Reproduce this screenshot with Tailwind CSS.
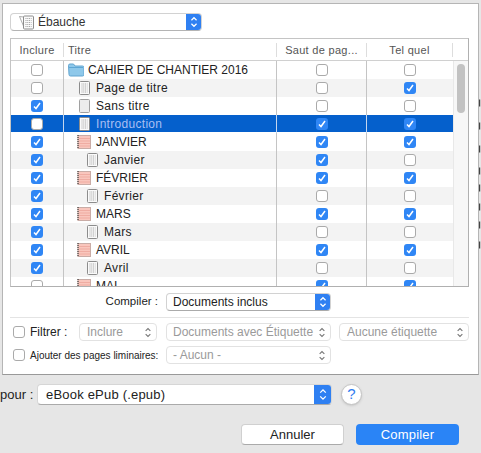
<!DOCTYPE html>
<html lang="fr">
<head>
    <meta charset="UTF-8">
    <script src="https://cdn.jsdelivr.net/npm/@tailwindcss/browser@4"></script>
    <title>Compiler</title>
</head>
<body class="relative w-[481px] h-[453px] overflow-hidden bg-[#e6e6e6] text-[#222] text-[12px] font-['Liberation_Sans',Arial,sans-serif]">
    <svg class="hidden">
        <symbol id="stepper" viewBox="0 0 8 14"><path d="M1 5l3-3 3 3M1 9l3 3 3-3" fill="none" stroke="currentColor" stroke-width="1.4"/></symbol>
        <symbol id="page" viewBox="0 0 11 14"><rect x=".5" y=".5" width="10" height="13" rx="1" fill="#fafafa" stroke="#8c8c8c"/><path d="M2.5 3h6M2.5 5h6M2.5 7h6M2.5 9h6M2.5 11h6" stroke="#7c7c7c" stroke-width=".7" stroke-dasharray="1 .8"/></symbol>
        <symbol id="blank" viewBox="0 0 11 14"><rect x=".5" y=".5" width="10" height="13" rx="1" fill="#ececec" stroke="#a0a0a0"/></symbol>
        <symbol id="notebook" viewBox="0 0 14 14"><rect x="1" y=".5" width="12.5" height="13" fill="#f9c6bd" stroke="#c9aca6"/><path d="M2 3.5h11M2 6h11M2 8.500h11M2 11h11" stroke="#e79a90" stroke-width=".6"/><path d="M1 0v14" stroke="#222" stroke-dasharray="1 1"/></symbol>
        <symbol id="folder" viewBox="0 0 16 14"><path d="M.5 2.500q0-1.500 1.500-1.500h3.500l1.500 2h7.500q1.500 0 1.500 1.500v7q0 1.500-1.500 1.500h-12q-1.500 0-1.500-1.500z" fill="#8ec8ea" stroke="#62a5d0"/><path d="M1 4.500h14" stroke="#5ea6d4"/></symbol>
    </svg>

    <div class="h-[372px] ml-[2px] mr-[2px] mt-[3px] bg-white border border-[#b5b5b5] border-b-[#999] pl-[7px] pt-[9px]">
        <!-- vue -->
        <div class="w-[192px] h-[18px] flex items-center rounded-[4px] border border-[#d2d2d2] border-b-[#b4b4b4] bg-white overflow-hidden">
            <svg class="w-[15px] h-[15px] ml-[8px] mr-[4px]" viewBox="0 0 15 15"><path d="M.5 1.500l4 .5v9z" fill="#fff" stroke="#777" stroke-width=".6"/><use href="#page" x="4" y="0" width="11" height="15"/></svg>
            <span class="flex-1 text-[12px] text-[#333]">Ébauche</span>
            <div class="w-[15px] h-full bg-[#2f80f2] text-white flex items-center justify-center"><svg class="w-[8px] h-[12px]"><use href="#stepper"/></svg></div>
        </div>

        <!-- tableau -->
        <div class="relative mt-[7px] w-[459px] h-[249px] border border-[#c4c4c4] border-b-[#b0b0b0] border-r-[#b0b0b0] overflow-hidden">
            <div class="grid grid-cols-[53px_213px_90px_86px_1fr] h-[22px] border-b border-[#d0d0d0] text-[11px] tracking-[.3px] text-[#555] items-center">
                <div class="text-center border-r border-[#ddd] h-[14px] leading-[14px]">Inclure</div>
                <div class="pl-[4px] border-r border-[#ddd] h-[14px] leading-[14px]">Titre</div>
                <div class="text-center border-r border-[#ddd] h-[14px] leading-[14px] whitespace-nowrap">Saut de pag...</div>
                <div class="text-center border-r border-[#ddd] h-[14px] leading-[14px]">Tel quel</div>
                <div></div>
            </div>
            <div id="lignes"></div>
            <!-- barre de défilement -->
            <div class="absolute right-0 top-[22px] bottom-0 w-[15px] bg-[#f7f7f7] border-l border-[#e8e8e8]">
                <div class="mx-auto mt-[3px] w-[8px] h-[49px] rounded-full bg-[#c2c2c2]"></div>
            </div>
        </div>

        <div class="mt-[4px] h-[22px] flex items-center">
            <span class="w-[148px] text-right text-[11.5px] text-[#222]">Compiler :</span>
            <div class="ml-[8px] w-[165px] h-[18px] flex items-center rounded-[4px] border border-[#d2d2d2] border-b-[#aaa] overflow-hidden">
                <span class="flex-1 pl-[6px] text-[12px]">Documents inclus</span>
                <div class="w-[15px] h-full bg-[#2f80f2] text-white flex items-center justify-center"><svg class="w-[8px] h-[12px]"><use href="#stepper"/></svg></div>
            </div>
        </div>

        <div class="mt-[4px] border-t border-[#e4e4e4] w-[459px]"></div>

        <div class="mt-[5px] h-[18px] flex items-center">
            <span class="ml-[3px] w-[12px] h-[12px] rounded-[3px] border border-[#aaa] bg-white"></span>
            <span class="ml-[5px] w-[49px] text-[12px]">Filtrer :</span>
            <div class="w-[78px] h-[18px] flex items-center rounded-[4px] border border-[#e2e2e2] text-[12px] text-[#9a9a9a]">
                <span class="flex-1 pl-[7px]">Inclure</span>
                <svg class="w-[8px] h-[11px] mr-[4px] text-[#777]"><use href="#stepper"/></svg>
            </div>
            <div class="ml-[9px] w-[165px] h-[18px] flex items-center rounded-[4px] border border-[#e2e2e2] text-[12px] text-[#9a9a9a]">
                <span class="flex-1 pl-[6px] whitespace-nowrap">Documents avec Étiquette</span>
                <svg class="w-[8px] h-[11px] mr-[4px] text-[#777]"><use href="#stepper"/></svg>
            </div>
            <div class="ml-[8px] w-[130px] h-[18px] flex items-center rounded-[4px] border border-[#e2e2e2] text-[12px] text-[#9a9a9a]">
                <span class="flex-1 pl-[7px] whitespace-nowrap">Aucune étiquette</span>
                <svg class="w-[8px] h-[11px] mr-[4px] text-[#777]"><use href="#stepper"/></svg>
            </div>
        </div>

        <div class="mt-[5px] h-[18px] flex items-center">
            <span class="ml-[3px] w-[12px] h-[12px] rounded-[3px] border border-[#aaa] bg-white"></span>
            <span class="ml-[5px] w-[136px] text-[10px] whitespace-nowrap">Ajouter des pages liminaires:</span>
            <div class="w-[165px] h-[18px] flex items-center rounded-[4px] border border-[#e2e2e2] text-[12px] text-[#9a9a9a]">
                <span class="flex-1 pl-[6px]">- Aucun -</span>
                <svg class="w-[8px] h-[11px] mr-[4px] text-[#777]"><use href="#stepper"/></svg>
            </div>
        </div>
    </div>

    <div class="mt-[9px] h-[21px] flex items-center">
        <span class="w-[32px] text-[13px] text-right whitespace-nowrap">pour :</span>
        <div class="ml-[5px] w-[295px] h-[21px] flex items-center rounded-[4px] border border-[#d6d6d6] border-b-[#aaa] bg-white overflow-hidden">
            <span class="flex-1 pl-[8px] text-[13px] tracking-[.2px]">eBook ePub (.epub)</span>
            <div class="w-[17px] h-full bg-[#2f80f2] text-white flex items-center justify-center"><svg class="w-[8px] h-[13px]"><use href="#stepper"/></svg></div>
        </div>
        <div class="ml-[9px] w-[21px] h-[21px] rounded-full bg-white border border-[#c4c4c4] shadow-sm text-[#2f7cf0] text-[15px] flex items-center justify-center">?</div>
    </div>

    <div class="mt-[19px] flex">
        <button class="ml-[241px] w-[103px] h-[21px] rounded-[4px] border border-[#d0d0d0] border-b-[#aaa] bg-white text-[13px] text-[#222]">Annuler</button>
        <button class="ml-[12px] w-[103px] h-[21px] rounded-[4px] bg-[#2a84f6] text-[13px] tracking-[.2px] text-white">Compiler</button>
    </div>

    <!-- bouts de texte de la fenêtre derrière -->
    <svg class="absolute left-[479px] top-0 w-[2px] h-[453px]">
        <path d="M0 103h2M0 126h2M0 149h2M0 171h2M0 188h2M0 207h2M0 225h2M0 245h2" stroke="#444" stroke-width="7" stroke-dasharray="1.2 1"/>
    </svg>

    <script>
        // [titre, icone, retrait, inclure, saut, tel quel]
        const lignes = [
            ["CAHIER DE CHANTIER 2016", "folder", 4, 0, 0, 0],
            ["Page de titre", "page", 15, 0, 0, 1],
            ["Sans titre", "blank", 15, 1, 0, 0],
            ["Introduction", "page", 15, 0, 1, 1],
            ["JANVIER", "notebook", 13, 1, 1, 1],
            ["Janvier", "page", 23, 1, 1, 0],
            ["FÉVRIER", "notebook", 13, 1, 1, 1],
            ["Février", "page", 23, 1, 0, 0],
            ["MARS", "notebook", 13, 1, 1, 1],
            ["Mars", "page", 23, 1, 0, 0],
            ["AVRIL", "notebook", 13, 1, 1, 1],
            ["Avril", "page", 23, 1, 0, 0],
            ["MAI", "notebook", 13, 0, 1, 1]
        ];
        const tailles = { folder: "w-[16px] h-[14px]", page: "w-[11px] h-[14px]", blank: "w-[11px] h-[14px]", notebook: "w-[14px] h-[14px]" };
        const textes = { folder: "ml-[4px]", page: "ml-[6px] tracking-[.3px]", blank: "ml-[6px] tracking-[.3px]", notebook: "ml-[5px]" };

        function caseACocher(cochee) {
            if (cochee) {
                return '<span class="w-[12px] h-[12px] rounded-[3px] bg-[#2f86f5] flex items-center justify-center"><svg class="w-[8px] h-[8px]" viewBox="0 0 8 8"><path d="M1 4.5l2 2 4-5.5" fill="none" stroke="#fff" stroke-width="1.5"/></svg></span>';
            }
            return '<span class="w-[12px] h-[12px] rounded-[3px] bg-white border border-[#aaa]"></span>';
        }

        document.getElementById("lignes").innerHTML = lignes.map((l, i) => {
            const choisie = i === 3;
            const fond = choisie ? "bg-[#0560cc] text-[#a9bff2] border-b border-white" : (i % 2 ? "bg-[#f3f3f3]" : "bg-white");
            const bord = choisie ? "border-r border-[#c4d6ee]" : "border-r border-[#c4c4c4]";
            return `<div class="grid grid-cols-[53px_213px_90px_86px_1fr] h-[18px] items-stretch ${fond}">
                <div class="flex items-center justify-center ${bord}">${caseACocher(l[3])}</div>
                <div class="flex items-center ${bord}" style="padding-left:${l[2]}px"><svg class="${tailles[l[1]]} shrink-0"><use href="#${l[1]}"/></svg><span class="${textes[l[1]]} whitespace-nowrap">${l[0]}</span></div>
                <div class="flex items-center justify-center ${bord}">${caseACocher(l[4])}</div>
                <div class="flex items-center justify-center">${caseACocher(l[5])}</div>
                <div></div>
            </div>`;
        }).join("");
    </script>
</body>
</html>
